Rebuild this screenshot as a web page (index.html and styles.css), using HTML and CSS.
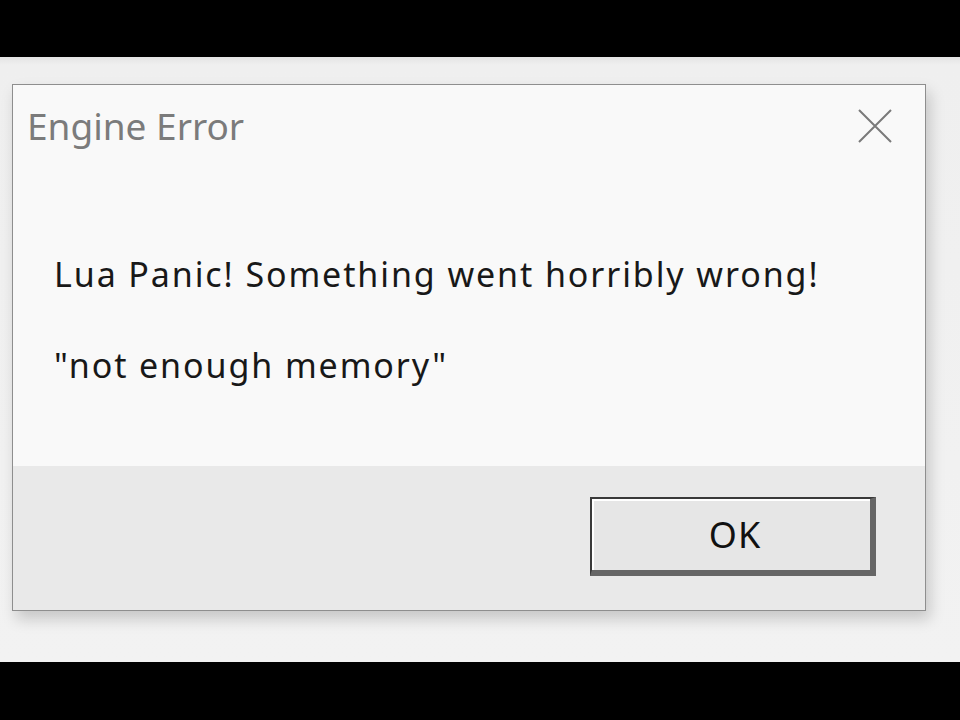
FILE: index.html
```html
<!DOCTYPE html>
<html>
<head>
<meta charset="utf-8">
<link rel="stylesheet" href="styles.css">
</head>
<body>
<div class="bar"></div>
<div class="screen">
  <div class="dialog">
    <div class="content">
      <div class="header">
        <div class="title">Engine Error</div>
        <svg class="close" width="36" height="36" viewBox="0 0 36 36">
          <path d="M2 2 L34 34 M34 2 L2 34" stroke="#7a7a7a" stroke-width="2" fill="none"/>
        </svg>
      </div>
      <p class="msg first">Lua Panic! Something went horribly wrong!</p>
      <p class="msg second">"not enough memory"</p>
    </div>
    <div class="footer">
      <button class="ok">OK</button>
    </div>
  </div>
</div>
<div class="bar"></div>
</body>
</html>
```
FILE: styles.css
```css
html, body {
  margin: 0;
  padding: 0;
  background: #000;
  height: 720px;
  overflow: hidden;
}
.bar {
  height: 57px;
  background: #000;
}
.screen {
  height: 605px;
  background: linear-gradient(#e4e4e4 0, #efefef 8px, #f2f2f2 100%);
  padding: 27px 0 0 12px;
  box-sizing: border-box;
}
.dialog {
  width: 914px;
  height: 527px;
  box-sizing: border-box;
  border: 1px solid #8e8e8e;
  display: flex;
  flex-direction: column;
  box-shadow: 4px 8px 14px rgba(0,0,0,0.18);
  font-family: "Noto Sans", "Open Sans", sans-serif;
}
.content {
  height: 381px;
  background: #f9f9f9;
  padding: 0 0 0 41px;
}
.header {
  display: flex;
  justify-content: space-between;
  align-items: flex-start;
  margin-left: -41px;
  padding: 19px 32px 0 14px;
}
.title {
  font-size: 37px;
  line-height: 44px;
  color: #7b7b7b;
}
.close {
  margin-top: 4px;
}
.msg {
  margin: 0;
  font-size: 34px;
  line-height: 40px;
  letter-spacing: 1.9px;
  color: #181818;
}
.msg.first {
  margin-top: 106px;
}
.msg.second {
  margin-top: 51px;
}
.footer {
  flex: 1;
  background: #e9e9e9;
  display: flex;
  justify-content: flex-end;
  align-items: flex-start;
  padding: 31px 49px 0 0;
}
.ok {
  width: 286px;
  height: 79px;
  box-sizing: border-box;
  background: #e6e6e6;
  border-style: solid;
  border-width: 2px 6px 6px 2px;
  border-color: #3a3a3a #666 #666 #3a3a3a;
  box-shadow: inset 2px 2px 0 #fff;
  font-family: "Noto Sans", "Open Sans", sans-serif;
  font-size: 36px;
  letter-spacing: 1px;
  color: #111;
  padding: 0 0 0 8px;
}
```
